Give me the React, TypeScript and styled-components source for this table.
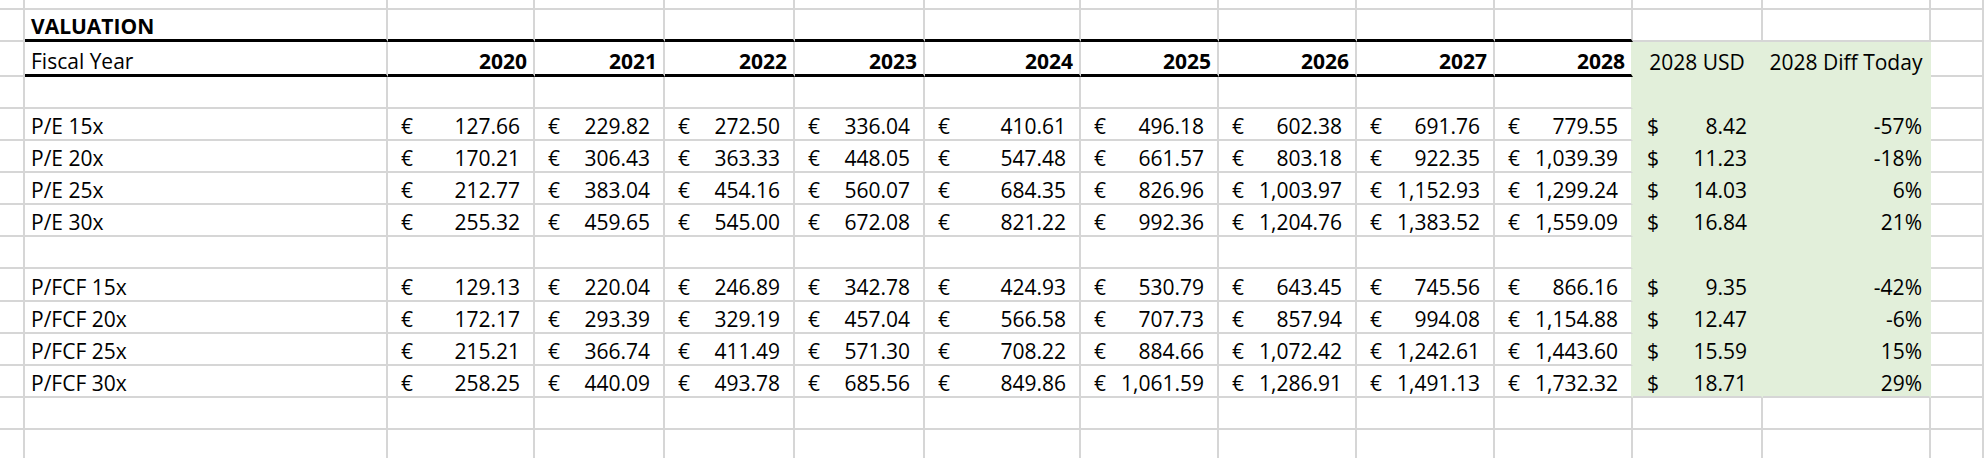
import React from 'react';
import styled, { createGlobalStyle } from 'styled-components';

const GRID = '#d6d6d6';
const GREEN = '#e2efda';

const cols = [25, 363, 147, 130, 130, 130, 156, 138, 138, 138, 138, 130, 168];
const rowHeights = [10, 32, 35, 32, 32, 32, 32, 32, 32, 33, 32, 32, 32, 32, 30];

const years = ['2020', '2021', '2022', '2023', '2024', '2025', '2026', '2027', '2028'];

type DataRow = { label: string; eur: string[]; usd: string; diff: string };

const peRows: DataRow[] = [
  { label: 'P/E 15x', eur: ['127.66', '229.82', '272.50', '336.04', '410.61', '496.18', '602.38', '691.76', '779.55'], usd: '8.42', diff: '-57%' },
  { label: 'P/E 20x', eur: ['170.21', '306.43', '363.33', '448.05', '547.48', '661.57', '803.18', '922.35', '1,039.39'], usd: '11.23', diff: '-18%' },
  { label: 'P/E 25x', eur: ['212.77', '383.04', '454.16', '560.07', '684.35', '826.96', '1,003.97', '1,152.93', '1,299.24'], usd: '14.03', diff: '6%' },
  { label: 'P/E 30x', eur: ['255.32', '459.65', '545.00', '672.08', '821.22', '992.36', '1,204.76', '1,383.52', '1,559.09'], usd: '16.84', diff: '21%' },
];

const fcfRows: DataRow[] = [
  { label: 'P/FCF 15x', eur: ['129.13', '220.04', '246.89', '342.78', '424.93', '530.79', '643.45', '745.56', '866.16'], usd: '9.35', diff: '-42%' },
  { label: 'P/FCF 20x', eur: ['172.17', '293.39', '329.19', '457.04', '566.58', '707.73', '857.94', '994.08', '1,154.88'], usd: '12.47', diff: '-6%' },
  { label: 'P/FCF 25x', eur: ['215.21', '366.74', '411.49', '571.30', '708.22', '884.66', '1,072.42', '1,242.61', '1,443.60'], usd: '15.59', diff: '15%' },
  { label: 'P/FCF 30x', eur: ['258.25', '440.09', '493.78', '685.56', '849.86', '1,061.59', '1,286.91', '1,491.13', '1,732.32'], usd: '18.71', diff: '29%' },
];

const GlobalStyle = createGlobalStyle`
  html, body {
    margin: 0;
    padding: 0;
    background: #fff;
  }
  body {
    font-family: "Open Sans", Lato, sans-serif;
    color: #000;
  }
`;

const Sheet = styled.div`
  display: grid;
  grid-template-columns: ${cols.map((c) => `${c}px`).join(' ')} 1fr;
  grid-template-rows: ${rowHeights.map((h) => `${h}px`).join(' ')};
  width: 1984px;
  height: 458px;
  overflow: hidden;
  font-size: 21px;
  line-height: 24px;
`;

type CellProps = {
  $align?: 'left' | 'right' | 'center' | 'split';
  $bold?: boolean;
  $fill?: boolean;
  $fillEnd?: boolean;
  $edge?: boolean;
  $thick?: boolean;
  $pl?: number;
  $pr?: number;
};

const justify = {
  left: 'flex-start',
  right: 'flex-end',
  center: 'center',
  split: 'space-between',
};

const Cell = styled.div<CellProps>`
  box-sizing: border-box;
  display: flex;
  align-items: flex-end;
  justify-content: ${(p) => justify[p.$align || 'left']};
  padding: 0 ${(p) => p.$pr ?? 6}px 1px ${(p) => p.$pl ?? 6}px;
  background: ${(p) => (p.$fill ? GREEN : '#fff')};
  border-right: 2px solid ${(p) => (p.$fill || p.$edge ? GREEN : GRID)};
  border-bottom: ${(p) =>
    p.$thick ? '3px solid #000' : `2px solid ${p.$fill && !p.$fillEnd ? GREEN : GRID}`};
  font-weight: ${(p) => (p.$bold ? 700 : 400)};
  white-space: nowrap;
  overflow: hidden;
`;

const Sym = styled.span``;
const Num = styled.span``;

function Blank({ n, from = 0, fillRow = false, fillEnd = false }: { n: number; from?: number; fillRow?: boolean; fillEnd?: boolean }) {
  return (
    <>
      {Array.from({ length: n }).map((_, i) => {
        const col = from + i;
        const fill = fillRow && (col === 11 || col === 12);
        return <Cell key={col} $fill={fill} $fillEnd={fillEnd} $edge={fillRow && col === 10} />;
      })}
    </>
  );
}

function ValueRow({ row, last }: { row: DataRow; last?: boolean }) {
  return (
    <>
      <Cell />
      <Cell>{row.label}</Cell>
      {row.eur.map((v, i) => (
        <Cell key={i} $align="split" $pl={13} $pr={13} $edge={i === 8}>
          <Sym>€</Sym>
          <Num>{v}</Num>
        </Cell>
      ))}
      <Cell $fill $fillEnd={last} $align="split" $pl={14} $pr={14}>
        <Sym>$</Sym>
        <Num>{row.usd}</Num>
      </Cell>
      <Cell $fill $fillEnd={last} $align="right" $pr={7}>
        {row.diff}
      </Cell>
      <Cell />
    </>
  );
}

export default function App() {
  return (
    <>
      <GlobalStyle />
      <Sheet>
        {/* partial top row */}
        <Blank n={14} />

        {/* title */}
        <Cell />
        <Cell $bold $thick>VALUATION</Cell>
        {Array.from({ length: 9 }).map((_, i) => (
          <Cell key={i} $thick />
        ))}
        <Blank n={3} from={11} />

        {/* fiscal year header */}
        <Cell />
        <Cell $thick>Fiscal Year</Cell>
        {years.map((y, i) => (
          <Cell key={y} $thick $bold $align="right" $edge={i === 8}>
            {y}
          </Cell>
        ))}
        <Cell $fill $align="center" $pl={0} $pr={0}>2028 USD</Cell>
        <Cell $fill $align="center" $pl={0} $pr={0}>2028 Diff Today</Cell>
        <Cell />

        <Blank n={14} fillRow />

        {peRows.map((r) => (
          <ValueRow key={r.label} row={r} />
        ))}

        <Blank n={14} fillRow />

        {fcfRows.map((r, i) => (
          <ValueRow key={r.label} row={r} last={i === fcfRows.length - 1} />
        ))}

        <Blank n={14} />
        <Blank n={14} />
      </Sheet>
    </>
  );
}
